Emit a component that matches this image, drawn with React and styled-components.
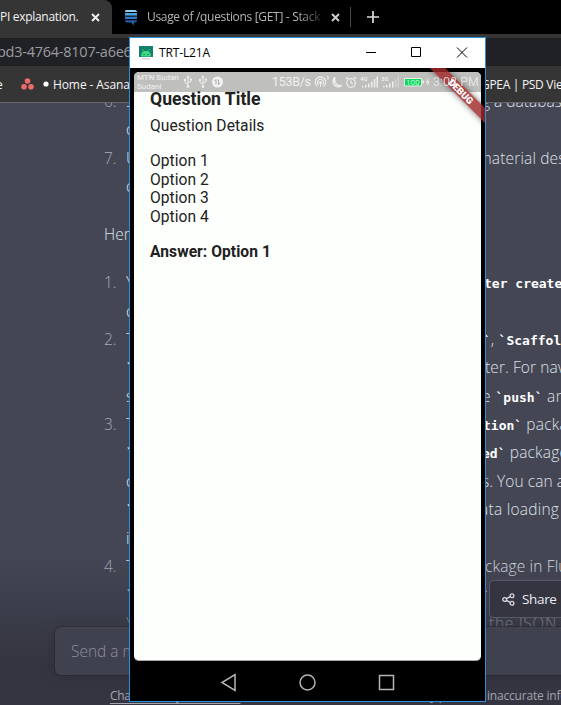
import React from "react";
import styled, { createGlobalStyle } from "styled-components";

const Global = createGlobalStyle`
  * { box-sizing: border-box; }
  html, body { margin: 0; padding: 0; overflow: hidden; background: #343541; }
`;

const ui = `"Open Sans", "Noto Sans", sans-serif`;
const mono = `"DejaVu Sans Mono", "Liberation Mono", monospace`;

const Desktop = styled.div`
  position: relative;
  width: 561px;
  height: 705px;
  overflow: hidden;
  font-family: ${ui};
  white-space: nowrap;
`;

/* Browser chrome */
const TabStrip = styled.div`
  display: flex;
  height: 34px;
  background: #000;
`;
const Tab = styled.div`
  display: flex;
  align-items: center;
  width: ${(p) => p.$width}px;
  padding-left: ${(p) => p.$pad || 0}px;
  background: ${(p) => (p.$active ? "#353535" : "#000")};
  border-radius: 0 8px 0 0;
  color: ${(p) => (p.$active ? "#f2f2f2" : "#b4b4b4")};
`;
const TabLabel = styled.span`
  width: ${(p) => p.$width}px;
  overflow: hidden;
  font-size: 12px;
  line-height: 18px;
  letter-spacing: ${(p) => p.$spacing || 0}px;
  ${(p) => p.$fade && "mask-image: linear-gradient(90deg, #000 86%, rgba(0, 0, 0, 0.2));"}
`;
const TabIcon = styled.svg`
  flex: none;
  margin-left: ${(p) => p.$gap || 0}px;
`;
const TabDivider = styled.div`
  width: 1px;
  height: 20px;
  margin: 7px 16px 0 9px;
  background: #4a4a4a;
`;
const Toolbar = styled.div`
  height: 32px;
  border-top: 4px solid #353535;
  background: #202124;
  color: #9b9ca0;
  font-size: 14.5px;
  line-height: 28px;
  letter-spacing: -0.25px;
  text-indent: -3px;
`;
const Bookmarks = styled.div`
  display: flex;
  align-items: center;
  height: 37px;
  border-bottom: 1px solid #666;
  background: #353535;
  color: #f4f4f4;
  font-size: 12px;
`;
const Bookmark = styled.span`
  width: ${(p) => (p.$width ? `${p.$width}px` : "auto")};
  flex: none;
  margin-left: ${(p) => p.$gap}px;
  letter-spacing: ${(p) => p.$spacing || 0}px;
`;

/* Conversation */
const Chat = styled.main`
  position: relative;
  height: 602px;
  overflow: hidden;
  background: #444654;
  color: #dfe2e8;
  font-size: 15.5px;
  font-weight: 300;
`;
const Lines = styled.div`
  margin-top: -16px;
`;
const Line = styled.div`
  display: grid;
  grid-template-columns: 22px 356px 1fr;
  height: 28.4px;
  margin-top: ${(p) => p.$before || 0}px;
  padding-left: 104px;
  line-height: 28.4px;
`;
const Marker = styled.span`
  color: ${(p) => (p.$lead ? "inherit" : "#a9acb8")};
`;
const Start = styled.span`
  overflow: hidden;
`;
const Rest = styled.span`
  margin-left: ${(p) => p.$x}px;
  letter-spacing: ${(p) => p.$spacing || 0}px;
`;
const Code = styled.b`
  color: #fff;
  font-family: ${mono};
  font-size: 13px;
  font-weight: 700;
  letter-spacing: 0;
`;
const Dock = styled.div`
  position: absolute;
  inset: auto 0 0 0;
  height: 150px;
  padding: 72px 0 0 55px;
  background: linear-gradient(rgba(52, 53, 65, 0), #343541 72%);
`;
const Composer = styled.div`
  height: 48px;
  margin-right: -20px;
  padding-left: 16px;
  border-radius: 6px;
  background: #40414f;
  box-shadow: 0 0 0 1px rgba(32, 33, 35, 0.4), 0 0 15px rgba(0, 0, 0, 0.12);
  color: #8e8ea0;
  font-size: 15.5px;
  line-height: 49px;
`;
const Notice = styled.div`
  display: flex;
  justify-content: space-between;
  padding: 12px 0 0 55px;
  color: #a2a3af;
  font-size: 12px;
  font-weight: 400;
  line-height: 18px;
  letter-spacing: -0.3px;
  u { text-underline-offset: 3px; }
`;
const NoticeEnd = styled.span`
  margin-right: -11px;
  letter-spacing: -0.2px;
`;
const Share = styled.button`
  position: absolute;
  top: 477px;
  left: 489px;
  display: flex;
  align-items: center;
  gap: 7px;
  width: 90px;
  height: 38px;
  padding: 0 0 0 12px;
  border: 1px solid #565869;
  border-radius: 4px;
  background: #343541;
  color: #ececf1;
  font: 400 13.5px ${ui};
  letter-spacing: -0.35px;
`;

/* Mirrored phone window */
const Window = styled.section`
  position: absolute;
  top: 37px;
  left: 129px;
  width: 357px;
  height: 665px;
  border: 1px solid #2a90dc;
  background: #000;
`;
const TitleBar = styled.header`
  display: flex;
  align-items: center;
  height: 30px;
  padding-left: 9px;
  background: #fff;
  color: #000;
  font-size: 12px;
`;
const Title = styled.span`
  flex: 1;
  padding: 0 0 2px 6px;
  letter-spacing: -0.15px;
`;
const Caption = styled.svg`
  width: 46px;
  height: 30px;
`;
const Device = styled.div`
  position: relative;
  height: 632px;
  padding: 4px 4px 0;
  overflow: hidden;
  font-family: Roboto, sans-serif;
`;
const Screen = styled.div`
  height: 589px;
  overflow: hidden;
  border-bottom: 1px solid #aaa;
  border-radius: 5px;
  background: #fdfffc;
  color: #212121;
`;
const StatusBar = styled.div`
  display: grid;
  grid-template-columns: 46px 15px 14px 60px 42px 17px 14px 15px 21px 23px 29px 1fr;
  align-items: center;
  height: 20px;
  padding-left: 3px;
  overflow: hidden;
  background: #bfc0be;
  color: #f0f1ef;
  font-size: 12.5px;
  line-height: 16px;
`;
const Carrier = styled.div`
  font-size: 8px;
  line-height: 9.5px;
`;
const StatusText = styled.span`
  letter-spacing: ${(p) => p.$spacing || 0}px;
`;
const Clock = styled(StatusText)`
  position: relative;
  z-index: 2;
  opacity: 0.75;
`;
const Question = styled.article`
  display: flex;
  flex-direction: column;
  padding-left: 16px;
`;
const QuestionTitle = styled.h1`
  margin: -4px 0 0;
  font-size: 17.6px;
  font-weight: 700;
  line-height: 22px;
`;
const Body = styled.p`
  margin: ${(p) => p.$top || 0}px 0 0;
  font-size: 15.6px;
  font-weight: ${(p) => (p.$bold ? 700 : 400)};
  line-height: 18.8px;
  letter-spacing: 0.05px;
`;
const Corner = styled.div`
  position: absolute;
  top: 0;
  right: 0;
  width: 75px;
  height: 75px;
  overflow: hidden;
`;
const Ribbon = styled.div`
  position: absolute;
  top: 18px;
  left: -9px;
  width: 120px;
  height: 11px;
  transform: rotate(45deg);
  background: rgba(160, 42, 42, 0.82);
  box-shadow: 0 0 6px rgba(0, 0, 0, 0.5);
  color: #fff;
  font-size: 9.6px;
  font-weight: 900;
  line-height: 11.5px;
  text-align: center;
`;
const NavBar = styled.nav`
  display: flex;
  justify-content: center;
  gap: 58px;
  padding-top: 11px;
`;
const NavIcon = styled.svg`
  width: 21px;
  height: 21px;
  fill: none;
  stroke: #b5b5b5;
  stroke-width: 1.5;
`;

const Close = ({ gap, color }) => (
  <TabIcon $gap={gap} width="9" height="9" viewBox="0 0 9 9">
    <path d="M1 1l7 7M8 1L1 8" stroke={color} strokeWidth="2" />
  </TabIcon>
);

const StackIcon = () => (
  <TabIcon width="14" height="17" viewBox="0 0 14 17">
    <path d="M1 3V2Q1 1 3 1h8q2 0 2 2z" fill="#8fd0f2" />
    <path d="M1 4h12v2.6H1z" fill="#4aa3e0" />
    <path d="M1 7.6h12v2.5H1z" fill="#2f78c4" />
    <path d="M1 11.2h12q0 2.3-3 2.3v3L7 13.5H3q-2 0-2-2.3z" fill="#2458a6" />
  </TabIcon>
);

const Usb = () => (
  <svg width="10" height="14" viewBox="0 0 10 14" fill="none" stroke="#eee">
    <path d="M5 2v9M5 9L2 7.5V5M5 8l3-1.5V4" />
    <path d="M5 0L3.4 3h3.2zM7 3.5h2v2H7z" fill="#eee" stroke="none" />
    <circle cx="5" cy="11.6" r="1.4" fill="#eee" stroke="none" />
    <circle cx="2" cy="5" r="1.2" fill="#eee" stroke="none" />
  </svg>
);

const Signal = ({ label, faint }) => (
  <svg width="19" height="14" viewBox="0 0 19 14" fill="#eee">
    <text x="0" y="5.5" fontSize="6" fontWeight="700">{label}</text>
    <path d="M2 11h1.5v1.5H2zM5 10h1.5v2.5H5zM8 8.5h1.5v4H8zM11 6.5h1.5v6H11z" />
    <path d="M13.8 4h1.5v8.5h-1.5zM16.500 1.500H18v11h-1.500z" opacity={faint ? 0.4 : 1} />
  </svg>
);

const lines = [
  { n: "6.", a: "S", x: 0, r: "g a database" },
  { a: "c" },
  { n: "7.", a: "U", x: -4, r: "material desi", s: 0.15 },
  { a: "c" },
  { a: "", lead: "Here", before: 19.6 },
  { n: "1.", a: "Y", before: 19.6, x: 2, r: <Code>ter create</Code> },
  { a: "c" },
  { n: "2.", a: "T", x: 1, r: <><Code>`</Code>, <Code>`Scaffold</Code></>, s: 0.2 },
  { a: <Code>`</Code>, x: 3, r: "ter. For navi", s: 0.1 },
  { a: "s", x: 0, r: <>e <Code>`push`</Code> and</>, s: 0.5 },
  { n: "3.", a: "T", x: 1, r: <><Code>tion`</Code> packa</>, s: 0.2 },
  { a: <Code>`</Code>, x: 0, r: <><Code>ed`</Code> package</>, s: 0.2 },
  { a: "c", x: 0, r: "s. You can al", s: 0.05 },
  { a: <Code>`</Code>, x: -2, r: "ata loading", s: 0.25 },
  { a: "i" },
  { n: "4.", a: "T", x: 3, r: "ckage in Flu", s: 0.15 },
  { a: <Code>`</Code>, x: 0, r: <Code>`</Code> },
  { a: "Y", x: 7, r: "the JSON", s: 0.7 },
];

export default function App() {
  return (
    <Desktop>
      <Global />
      <TabStrip>
        <Tab $active $width={112}>
          <TabLabel $width={84} $spacing={-0.3}>PI explanation.</TabLabel>
          <Close gap={7} color="#eee" />
        </Tab>
        <Tab $width={229} $pad={12}>
          <StackIcon />
          <TabIcon width="9" height="1" />
          <TabLabel $width={175} $spacing={-0.32} $fade>Usage of /questions [GET] - Stack</TabLabel>
          <Close gap={9} color="#ccc" />
        </Tab>
        <TabDivider />
        <TabIcon width="12" height="34" viewBox="0 0 12 34">
          <path d="M0 17h12M6 11v12" stroke="#ddd" strokeWidth="1.7" />
        </TabIcon>
      </TabStrip>
      <Toolbar>bd3-4764-8107-a6e6</Toolbar>
      <Bookmarks>
        <Bookmark $gap={-4} $width={7}>e</Bookmark>
        <TabIcon $gap={18} width="13" height="12" viewBox="0 0 13 12" fill="#f06a6a">
          <circle cx="6.5" cy="3" r="2.8" />
          <circle cx="3" cy="8.8" r="2.8" />
          <circle cx="10" cy="8.8" r="2.8" />
        </TabIcon>
        <TabIcon $gap={9} width="6" height="6" viewBox="0 0 6 6"><circle cx="3" cy="3" r="2.6" fill="#fff" /></TabIcon>
        <Bookmark $gap={4} $width={80} $spacing={-0.1}>Home - Asana</Bookmark>
        <Bookmark $gap={348} $spacing={-0.3}>GPEA | PSD Viewer</Bookmark>
      </Bookmarks>
      <Chat>
        <Lines>
          {lines.map((l, i) => (
            <Line key={i} $before={l.before}>
              <Marker $lead={Boolean(l.lead)}>{l.lead || l.n}</Marker>
              <Start>{l.a}</Start>
              <Rest $x={l.x} $spacing={l.s}>{l.r}</Rest>
            </Line>
          ))}
        </Lines>
        <Dock>
          <Composer>Send a message</Composer>
          <Notice>
            <u>ChatGPT May 24 Version</u>
            <NoticeEnd>may produce inaccurate infor</NoticeEnd>
          </Notice>
        </Dock>
        <Share>
          <svg width="13" height="13" viewBox="0 0 13 13" fill="none" stroke="#d9d9e3" strokeWidth="1.3">
            <circle cx="2.7" cy="6.5" r="1.9" />
            <circle cx="10" cy="2.7" r="1.9" />
            <circle cx="10" cy="10.3" r="1.9" />
            <path d="M4.4 5.6l4-2M4.4 7.4l4 2" />
          </svg>
          Share
        </Share>
      </Chat>

      <Window>
        <TitleBar>
          <svg width="14" height="14" viewBox="0 0 14 14">
            <path d="M0 0h14v11H0z" fill="#14806b" />
            <path d="M2 10.5Q2 5 7 5t5 5.5z" fill="#3ddc84" />
            <path d="M3.5 3.5l1.5 2M10.5 3.5L9 5.5" stroke="#3ddc84" />
            <path d="M4.5 8h1v1h-1zM8.5 8h1v1h-1z" fill="#0b4a40" />
            <path d="M3 12h8v1.5H3z" fill="#d5d5d5" />
          </svg>
          <Title>TRT-L21A</Title>
          <Caption viewBox="0 0 46 30"><path d="M19 14.5h10" stroke="#000" /></Caption>
          <Caption viewBox="0 0 46 30"><path d="M18.5 9.5h9v9h-9z" fill="none" stroke="#000" /></Caption>
          <Caption viewBox="0 0 46 30"><path d="M18 9.5l10 10M28 9.5l-10 10" stroke="#000" /></Caption>
        </TitleBar>
        <Device>
          <Screen>
            <StatusBar>
              <Carrier>MTN Sudan<br />Sudani</Carrier>
              <Usb />
              <Usb />
              <svg width="11" height="12" viewBox="0 0 11 12">
                <circle cx="5.5" cy="6" r="5.5" fill="#f2f2f2" />
                <path d="M4 8.5v-5L2.6 5M6.5 3.5v5L8 7" fill="none" stroke="#aaa" />
              </svg>
              <StatusText $spacing={-0.3}>153B/s</StatusText>
              <svg width="16" height="14" viewBox="0 0 16 14" fill="none" stroke="#eee">
                <path d="M3.5 11.5a5.3 5.3 0 1 1 6 0M4.5 9.5a3 3 0 1 1 4 0" strokeWidth="1.2" />
                <circle cx="6.5" cy="7.5" r="1" fill="#eee" />
                <path d="M6.5 8v4M14 4.5V1l-1 .8" />
              </svg>
              <svg width="12" height="13" viewBox="0 0 12 13" fill="none" stroke="#eee" strokeWidth="1.4">
                <path d="M4 1.2A6 6 0 0 0 10.8 9.5 5 5 0 1 1 4 1.2z" />
              </svg>
              <svg width="12" height="13" viewBox="0 0 12 13" fill="none" stroke="#eee" strokeWidth="1.2">
                <circle cx="6" cy="7" r="4.3" />
                <path d="M6 4.5V7l2 1M.8 3L3 1M9 1l2.2 2" />
              </svg>
              <Signal label="4G" />
              <Signal label="3G" faint />
              <svg width="27" height="12" viewBox="0 0 27 12">
                <path d="M.5 2.5h17v7.500H.5z" fill="#08d85c" stroke="#eee" />
                <path d="M18.5 4.5H20v3h-1.5zM24.500 2L22 6.500h1.700L23 10l2.700-4.500h-1.600z" fill="#eee" />
                <text x="2" y="9" fontSize="8" fill="#c8f5d8">100</text>
              </svg>
              <Clock>3:08 PM</Clock>
            </StatusBar>
            <Question>
              <QuestionTitle>Question Title</QuestionTitle>
              <Body $top={7}>Question Details</Body>
              <Body $top={16}>Option 1</Body>
              <Body>Option 2</Body>
              <Body>Option 3</Body>
              <Body>Option 4</Body>
              <Body $top={16} $bold>Answer: Option 1</Body>
            </Question>
          </Screen>
          <Corner><Ribbon>DEBUG</Ribbon></Corner>
          <NavBar>
            <NavIcon viewBox="0 0 21 21"><path d="M17 2.5v16L4 10.5z" /></NavIcon>
            <NavIcon viewBox="0 0 21 21"><circle cx="10.5" cy="10.5" r="7.5" /></NavIcon>
            <NavIcon viewBox="0 0 21 21"><path d="M3.5 3.5h14v14h-14z" /></NavIcon>
          </NavBar>
        </Device>
      </Window>
    </Desktop>
  );
}
